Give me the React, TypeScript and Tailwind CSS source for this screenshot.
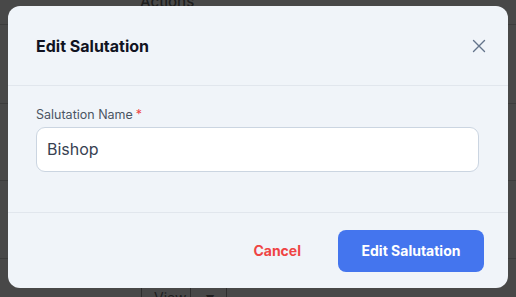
import React, { useState } from "react";

const rows = [24, 103, 180, 258];

const CloseIcon = () => (
  <svg width="14" height="14" viewBox="0 0 14 14" fill="none">
    <path d="M1.5 1.5L12.5 12.5M12.5 1.5L1.5 12.5" stroke="#64748b" strokeWidth="1.4" strokeLinecap="round" />
  </svg>
);

const App = () => {
  const [name, setName] = useState("Bishop");

  return (
    <div
      className="relative w-[516px] h-[297px] overflow-hidden bg-[#484848]"
      style={{ fontFamily: "Inter, 'Noto Sans', sans-serif" }}
    >
      {/* backdrop page (dimmed) */}
      <div className="absolute inset-0">
        <div className="absolute left-[140px] top-[-9px] text-[15px] font-medium text-[#1e1e1e]">Actions</div>
        {rows.map((y) => (
          <div key={y} className="absolute left-0 right-0 h-px bg-[#3c3c3c]" style={{ top: y }} />
        ))}
        <div className="absolute left-[141px] top-[288px] flex h-[20px] w-[86px] items-start border-x border-[#2e2e2e] text-[14px] text-[#1e1e1e]">
          <span className="pl-[12px] pr-[4px] leading-[20px]">View</span>
          <span className="h-[10px] w-px bg-[#2e2e2e]" />
          <span className="ml-[14px] text-[9px] leading-[22px]">▼</span>
        </div>
      </div>

      {/* modal */}
      <div className="absolute left-[8px] top-[6px] flex h-[282px] w-[500px] flex-col rounded-[12px] bg-[#f0f4f9]">
        <div className="flex h-[80px] items-center justify-between border-b border-[#e1e6ed] pl-[28px] pr-[19px]">
          <h2 className="text-[16px] font-bold text-[#111322]">Edit Salutation</h2>
          <button className="flex h-[20px] w-[20px] items-center justify-center">
            <CloseIcon />
          </button>
        </div>

        <div className="h-[127px] border-b border-[#e1e6ed] px-[28px] pt-[20px]">
          <label htmlFor="salutation" className="flex items-center text-[12.5px] text-[#4b5563]">
            Salutation Name
            <span className="ml-[3px] text-[#ef4444]">*</span>
          </label>
          <input
            id="salutation"
            className="mt-[2px] h-[45px] w-[443px] rounded-[9px] border border-[#cbd5e1] bg-white px-[10px] text-[16px] text-[#374151] outline-none"
            value={name}
            onChange={(e) => setName(e.target.value)}
          />
        </div>

        <div className="flex flex-1 items-center justify-end gap-[37px] pr-[24px]">
          <button className="text-[14px] font-bold text-[#ef4444]">Cancel</button>
          <button className="h-[42px] w-[146px] rounded-[8px] bg-[#4475ee] text-[14px] font-bold text-white">
            Edit Salutation
          </button>
        </div>
      </div>
    </div>
  );
};

export default App;
